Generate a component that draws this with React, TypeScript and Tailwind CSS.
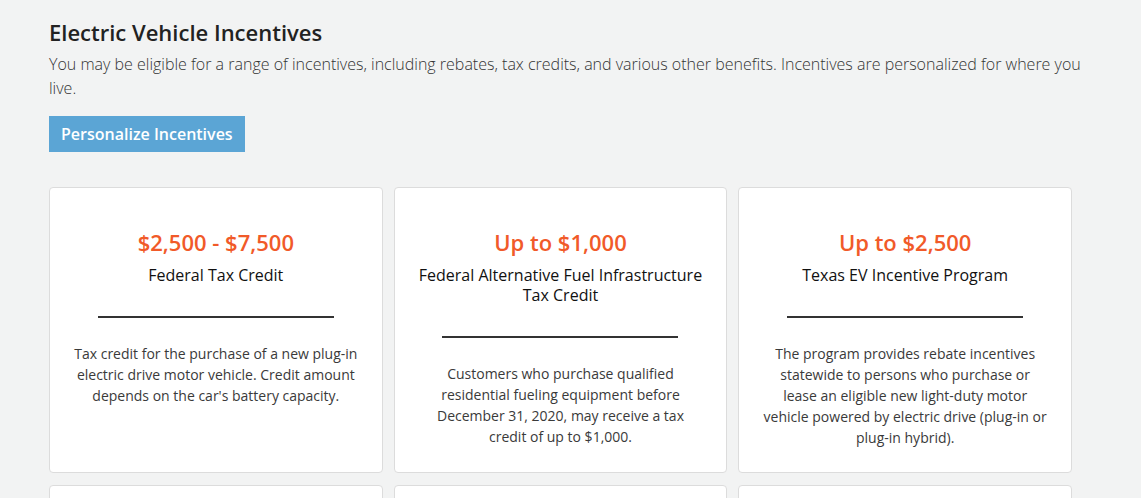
import React from "react";

type Incentive = {
  amount: string;
  name: string;
  description: string;
};

const incentives: Incentive[] = [
  {
    amount: "$2,500 - $7,500",
    name: "Federal Tax Credit",
    description:
      "Tax credit for the purchase of a new plug-in electric drive motor vehicle. Credit amount depends on the car's battery capacity.",
  },
  {
    amount: "Up to $1,000",
    name: "Federal Alternative Fuel Infrastructure Tax Credit",
    description:
      "Customers who purchase qualified residential fueling equipment before December 31, 2020, may receive a tax credit of up to $1,000.",
  },
  {
    amount: "Up to $2,500",
    name: "Texas EV Incentive Program",
    description:
      "The program provides rebate incentives statewide to persons who purchase or lease an eligible new light-duty motor vehicle powered by electric drive (plug-in or plug-in hybrid).",
  },
  { amount: "", name: "", description: "" },
  { amount: "", name: "", description: "" },
  { amount: "", name: "", description: "" },
];

function IncentiveCard({ amount, name, description }: Incentive) {
  return (
    <div className="bg-white border border-[#dcdcdc] rounded-[4px] h-[286px] pt-[39px] flex flex-col items-center text-center">
      {amount && (
        <>
          <div className="text-[22px] leading-[30px] font-semibold text-[#f15a29]">{amount}</div>
          <div className="mt-[8px] text-[16px] leading-[20px] text-[#111] max-w-[300px]">{name}</div>
          <div className="mt-[31px] w-[236px] h-[2px] bg-[#333]" />
          <p className="mt-[25px] text-[14px] leading-[21px] text-[#3a3a3a] max-w-[285px]">{description}</p>
        </>
      )}
    </div>
  );
}

export default function App() {
  return (
    <div
      className="min-h-screen bg-[#f2f3f3] pt-[18px] pl-[49px] pr-[40px]"
      style={{ fontFamily: '"Open Sans", sans-serif' }}
    >
      <h1 className="text-[22px] leading-[28px] font-semibold text-[#222]">Electric Vehicle Incentives</h1>
      <p className="mt-[6px] text-[16px] leading-[24px] font-light text-[#333] max-w-[1045px]">
        You may be eligible for a range of incentives, including rebates, tax credits, and various other benefits.
        Incentives are personalized for where you live.
      </p>
      <button className="mt-[16px] h-[36px] px-3 bg-[#5ba5d5] text-white text-[16px] font-semibold">
        Personalize Incentives
      </button>
      <div className="mt-[35px] grid grid-cols-3 gap-x-[11px] gap-y-[12px] w-[1023px]">
        {incentives.map((inc, i) => (
          <IncentiveCard key={i} {...inc} />
        ))}
      </div>
    </div>
  );
}
